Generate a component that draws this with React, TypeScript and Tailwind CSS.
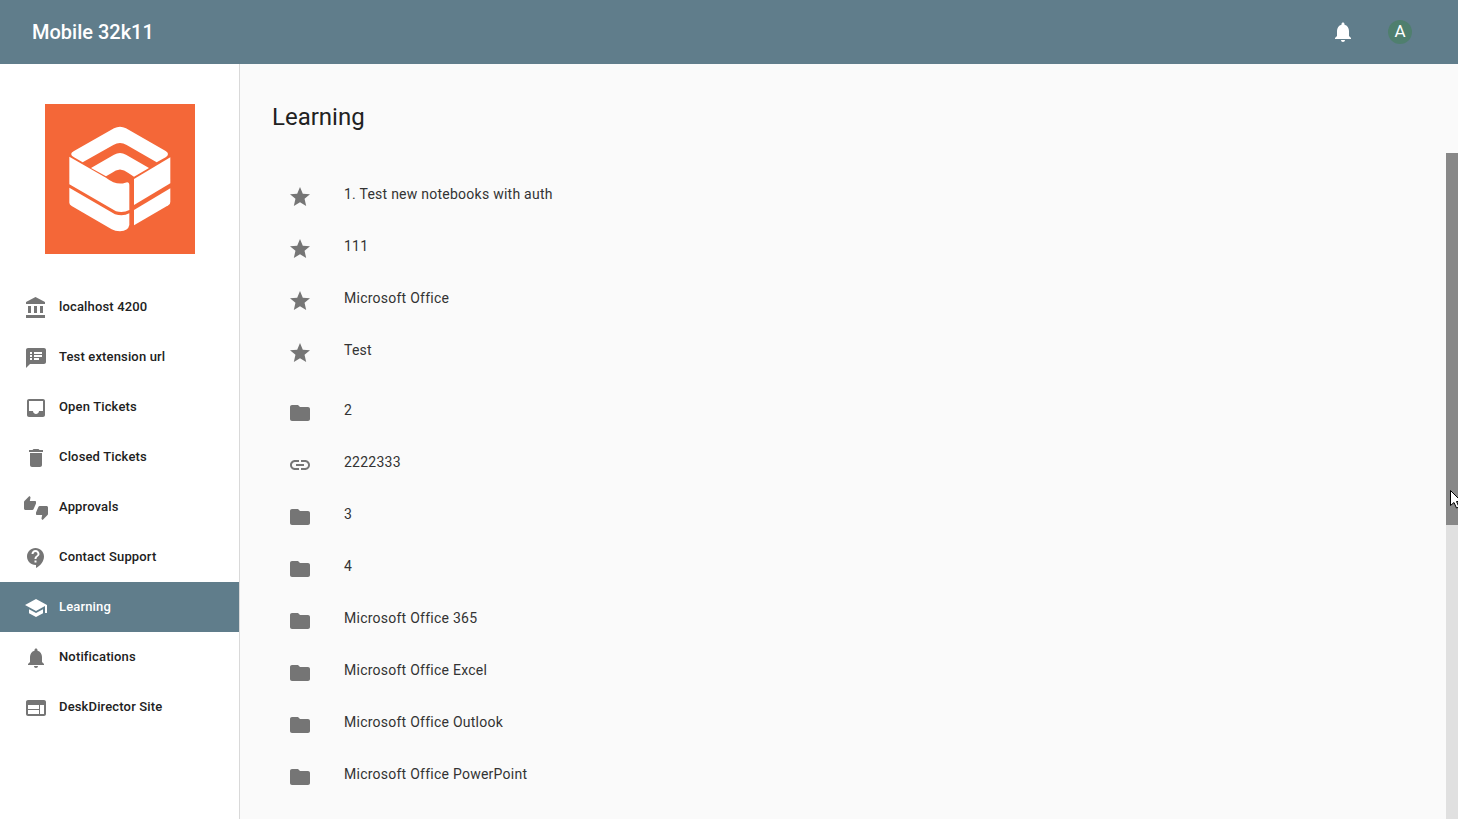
const nav = [
  { label: 'localhost 4200', d: 'M4 10v7h3v-7H4zm6 0v7h3v-7h-3zM2 22h19v-3H2v3zm14-12v7h3v-7h-3zm-4.5-9L2 6v2h19V6l-9.5-5z' },
  { label: 'Test extension url', d: 'M20 2H4c-1.1 0-1.99.9-1.99 2L2 22l4-4h14c1.1 0 2-.9 2-2V4c0-1.1-.9-2-2-2zM8 14H6v-2h2v2zm0-3H6V9h2v2zm0-3H6V6h2v2zm7 6h-5v-2h5v2zm3-3h-8V9h8v2zm0-3h-8V6h8v2z' },
  { label: 'Open Tickets', d: 'M19 3H4.99c-1.11 0-1.98.89-1.98 2L3 19c0 1.1.88 2 1.99 2H19c1.1 0 2-.9 2-2V5c0-1.11-.9-2-2-2zm0 12h-4c0 1.66-1.35 3-3 3s-3-1.34-3-3H4.99V5H19v10z' },
  { label: 'Closed Tickets', d: 'M6 19c0 1.1.9 2 2 2h8c1.1 0 2-.9 2-2V7H6v12zM19 4h-3.5l-1-1h-5l-1 1H5v2h14V4z' },
  { label: 'Approvals', d: 'M12 6c0-.55-.45-1-1-1H5.82l.66-3.18.02-.23c0-.31-.13-.59-.33-.8L5.38 0 .44 4.94C.17 5.21 0 5.59 0 6v6.5c0 .83.67 1.5 1.5 1.5h6.75c.62 0 1.15-.38 1.38-.91l2.26-5.29c.07-.17.11-.36.11-.55V6zm10.5 4h-6.75c-.62 0-1.15.38-1.38.91l-2.26 5.29c-.07.17-.11.36-.11.55V18c0 .55.45 1 1 1h5.18l-.66 3.18-.02.24c0 .31.13.59.33.8l.79.78 4.94-4.94c.27-.27.44-.65.44-1.06v-6.5c0-.83-.67-1.5-1.5-1.5z' },
  { label: 'Contact Support', d: 'M11.5 2C6.81 2 3 5.81 3 10.5S6.81 19 11.5 19h.5v3c4.86-2.34 8-7 8-11.5C20 5.81 16.19 2 11.5 2zm1 14.5h-2v-2h2v2zm0-3.5h-2c0-3.25 3-3 3-5 0-1.1-.9-2-2-2s-2 .9-2 2h-2c0-2.21 1.79-4 4-4s4 1.79 4 4c0 2.5-3 2.75-3 5z' },
  { label: 'Learning', d: 'M5 13.18v4L12 21l7-3.82v-4L12 17l-7-3.82zM12 3L1 9l11 6 9-4.91V17h2V9L12 3z', active: true },
  { label: 'Notifications', d: 'M12 22c1.1 0 2-.9 2-2h-4c0 1.1.89 2 2 2zm6-6v-5c0-3.07-1.64-5.64-4.5-6.32V4c0-.83-.67-1.5-1.5-1.5s-1.5.67-1.5 1.5v.68C7.63 5.36 6 7.92 6 11v5l-2 2v1h16v-1l-2-2z' },
  { label: 'DeskDirector Site', d: 'M20 4H4c-1.1 0-1.99.9-1.99 2L2 18c0 1.1.9 2 2 2h16c1.1 0 2-.9 2-2V6c0-1.1-.9-2-2-2zm-5 14H4v-4h11v4zm0-5H4V9h11v4zm5 5h-4V9h4v9z' },
];

const star = 'M12 17.27L18.18 21l-1.64-7.19L22 9.24l-7.19-.61L12 2 9.19 8.63 2 9.24l5.46 4.55L5.82 21z';
const folder = 'M10 4H4c-1.1 0-1.99.9-1.99 2L2 18c0 1.1.9 2 2 2h16c1.1 0 2-.9 2-2V8c0-1.1-.9-2-2-2h-8l-2-2z';
const link = 'M3.9 12c0-1.71 1.39-3.1 3.1-3.1h4V7H7c-2.76 0-5 2.24-5 5s2.24 5 5 5h4v-1.9H7c-1.71 0-3.1-1.39-3.1-3.1zM8 13h8v-2H8v2zm9-6h-4v1.9h4c1.71 0 3.1 1.39 3.1 3.1s-1.39 3.1-3.1 3.1h-4V17h4c2.76 0 5-2.24 5-5s-2.24-5-5-5z';
const bell = nav[7].d;

const starred = ['1. Test new notebooks with auth', '111', 'Microsoft Office', 'Test'];
const others = [
  { label: '2', d: folder },
  { label: '2222333', d: link },
  { label: '3', d: folder },
  { label: '4', d: folder },
  { label: 'Microsoft Office 365', d: folder },
  { label: 'Microsoft Office Excel', d: folder },
  { label: 'Microsoft Office Outlook', d: folder },
  { label: 'Microsoft Office PowerPoint', d: folder },
];

const Icon = ({ d, className }: { d: string; className: string }) => (
  <svg viewBox="0 0 24 24" className={className} fill="currentColor">
    <path d={d} />
  </svg>
);

const Logo = () => (
  <svg viewBox="135 72 450 450" className="w-[150px] h-[150px]">
    <rect x="135" y="72" width="450" height="450" fill="#f46738" />
    <g fill="#ffffff">
      <path d="M342 145Q360 135 378 145L497 213Q511 222 497 232L470 247L380 195Q360 183 340 195L248 247L222 232Q205 222 222 213Z" />
      <path d="M273 264L342 224Q360 214 378 224L447 264L402 290L385 279Q360 258 335 279L318 289Z" />
      <path d="M208 230L318 293Q350 318 376 308Q388 304 388 316L388 390Q370 400 348 394L208 313Z" />
      <path d="M208 323L345 403Q370 410 388 400L388 435Q385 452 360 454Q345 454 335 448L215 378Q208 374 208 368Z" />
      <path d="M402 297L511 232L511 310L402 375Z" />
      <path d="M402 390L511 325L511 365Q511 372 505 376L402 436Z" />
    </g>
  </svg>
);

const Row = ({ label, d }: { label: string; d: string }) => (
  <div className="flex h-[52px] items-center">
    <Icon d={d} className="w-6 h-6 ml-4 mt-1.5 text-[#757575] shrink-0" />
    <span className="ml-8 text-sm tracking-[0.25px] text-[#333333]">{label}</span>
  </div>
);

export default function App() {
  return (
    <div className="h-[819px] flex flex-col overflow-hidden bg-[#fafafa] font-['Roboto',sans-serif]">
      <header className="h-16 shrink-0 bg-[#607d8b] flex items-center pl-8 pr-[46px] text-white">
        <div className="text-xl font-medium flex-1">Mobile 32k11</div>
        <Icon d={bell} className="w-6 h-6 mr-[33px]" />
        <div className="w-6 h-6 rounded-full bg-[#4f7f6e] flex items-center justify-center text-[17px]">A</div>
      </header>
      <div className="flex-1 flex min-h-0">
        <aside className="w-60 shrink-0 bg-white border-r border-[#d9d9d9]">
          <div className="flex justify-center pt-10 pb-7">
            <Logo />
          </div>
          {nav.map(item => (
            <div
              key={item.label}
              className={`h-[50px] flex items-center pl-6 ${item.active ? 'bg-[#607d8b] text-white' : 'text-[#212121]'}`}
            >
              <Icon d={item.d} className={`w-6 h-6 shrink-0 mt-0.5 ${item.active ? 'text-white' : 'text-[#757575]'}`} />
              <span className="ml-[11px] text-[13px] font-medium tracking-[0.15px]">{item.label}</span>
            </div>
          ))}
        </aside>
        <main className="flex-1 min-w-0 pl-8 pt-[39px]">
          <h1 className="text-2xl leading-7 text-[#212121]">Learning</h1>
          <div className="mt-[37px]">
            {starred.map(label => <Row key={label} label={label} d={star} />)}
          </div>
          <div className="mt-2">
            {others.map(item => <Row key={item.label} label={item.label} d={item.d} />)}
          </div>
        </main>
        <div className="relative w-3 shrink-0 flex flex-col">
          <div className="h-[89px] bg-[#fafafa]" />
          <div className="h-[372px] bg-[#888888]" />
          <div className="flex-1 bg-[#e0e0e0]" />
          <svg viewBox="0 0 12 19" className="absolute left-[4px] top-[426px] w-3 h-[19px]">
            <path d="M0.5 0.5V15.5L4 12.5L6.5 18L9 17L6.5 11.5H11.5Z" fill="#ffffff" stroke="#000000" />
          </svg>
        </div>
      </div>
    </div>
  );
}
